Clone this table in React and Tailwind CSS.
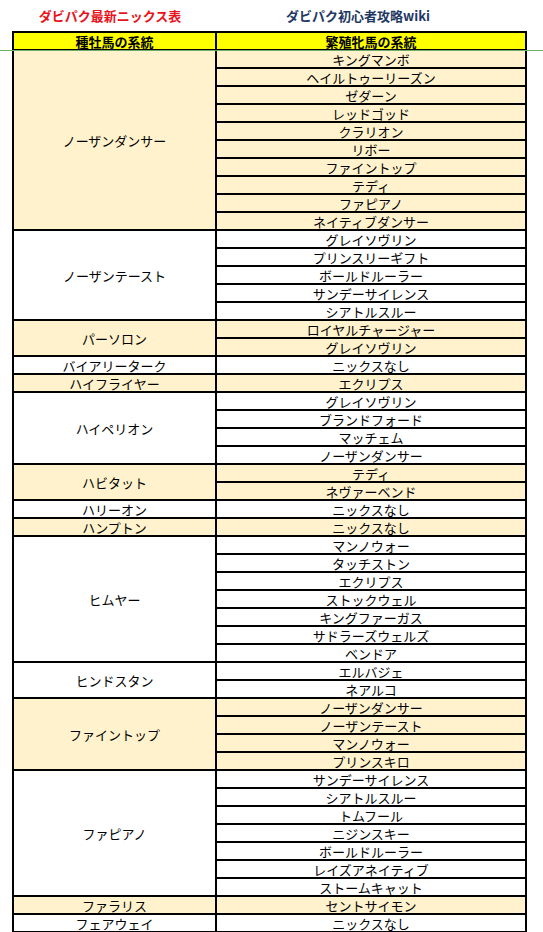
import React from 'react'

const CREAM = 'bg-[#fff2cc]'
const WHITE = 'bg-white'

// 種牡馬 -> 繁殖牝馬 の一覧
const groups = [
  { sire: 'ノーザンダンサー', cream: true, mares: ['キングマンボ', 'ヘイルトゥーリーズン', 'ゼダーン', 'レッドゴッド', 'クラリオン', 'リボー', 'ファイントップ', 'テディ', 'ファピアノ', 'ネイティブダンサー'] },
  { sire: 'ノーザンテースト', cream: false, mares: ['グレイソヴリン', 'プリンスリーギフト', 'ボールドルーラー', 'サンデーサイレンス', 'シアトルスルー'] },
  { sire: 'パーソロン', cream: true, mares: ['ロイヤルチャージャー', 'グレイソヴリン'] },
  { sire: 'バイアリーターク', cream: false, mares: ['ニックスなし'] },
  { sire: 'ハイフライヤー', cream: true, mares: ['エクリプス'] },
  { sire: 'ハイペリオン', cream: false, mares: ['グレイソヴリン', 'ブランドフォード', 'マッチェム', 'ノーザンダンサー'] },
  { sire: 'ハビタット', cream: true, mares: ['テディ', 'ネヴァーベンド'] },
  { sire: 'ハリーオン', cream: false, mares: ['ニックスなし'] },
  { sire: 'ハンプトン', cream: true, mares: ['ニックスなし'] },
  { sire: 'ヒムヤー', cream: false, mares: ['マンノウォー', 'タッチストン', 'エクリプス', 'ストックウェル', 'キングファーガス', 'サドラーズウェルズ', 'ベンドア'] },
  { sire: 'ヒンドスタン', cream: false, mares: ['エルバジェ', 'ネアルコ'] },
  { sire: 'ファイントップ', cream: true, mares: ['ノーザンダンサー', 'ノーザンテースト', 'マンノウォー', 'プリンスキロ'] },
  { sire: 'ファピアノ', cream: false, mares: ['サンデーサイレンス', 'シアトルスルー', 'トムフール', 'ニジンスキー', 'ボールドルーラー', 'レイズアネイティブ', 'ストームキャット'] },
  { sire: 'ファラリス', cream: true, mares: ['セントサイモン'] },
  { sire: 'フェアウェイ', cream: false, mares: ['ニックスなし'] },
]

export default function App() {
  return (
    <div className="relative w-[543px] h-[932px] overflow-hidden bg-white text-black font-['Noto_Sans_CJK_JP','Noto_Sans',sans-serif]">
      {/* titles */}
      <div className="flex h-[31px] items-center text-[13px] font-bold">
        <div className="w-[220px] text-center text-[#e8141c]">ダビパク最新ニックス表</div>
        <div className="w-[276px] text-center text-[#1f3864]">ダビパク初心者攻略wiki</div>
      </div>

      {/* table */}
      <div className="ml-[12px] w-[515px] bg-black p-[2px] flex flex-col gap-[2px]">
        <div className="flex gap-[2px] h-4 text-[13px] font-bold leading-[15px]">
          <div className="w-[201px] bg-[#ffff00] text-center pt-px">種牡馬の系統</div>
          <div className="flex-1 bg-[#ffff00] text-center pt-px">繁殖牝馬の系統</div>
        </div>
        {groups.map((g) => {
          const bg = g.cream ? CREAM : WHITE
          return (
            <div key={g.sire} className="flex gap-[2px] text-[13px] leading-[15px]">
              <div className={`w-[201px] ${bg} flex items-center justify-center pt-px`}>{g.sire}</div>
              <div className="flex-1 flex flex-col gap-[2px]">
                {g.mares.map((m, i) => (
                  <div key={i} className={`h-4 ${bg} text-center pt-px`}>{m}</div>
                ))}
              </div>
            </div>
          )
        })}
      </div>

      {/* green guide line over the header */}
      <div className="absolute left-0 top-[50px] w-full h-px bg-[#70ad6b]" />
    </div>
  )
}
